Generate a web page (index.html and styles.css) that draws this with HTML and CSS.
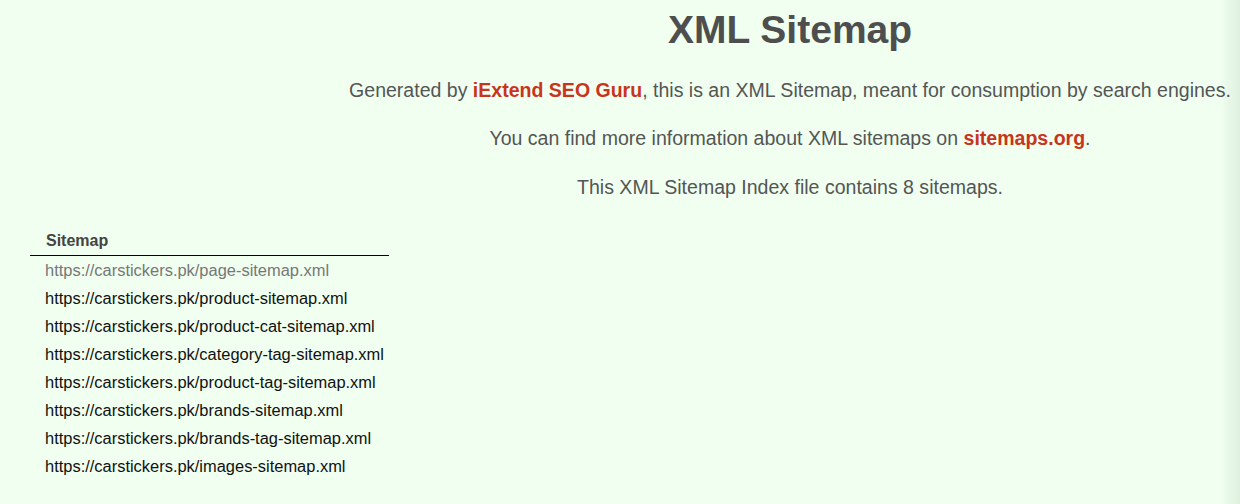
FILE: index.html
```html
<!DOCTYPE html>
<html lang="en">
<head>
<meta charset="utf-8">
<title>XML Sitemap</title>
<link rel="stylesheet" href="styles.css">
</head>
<body>
<div class="intro">
  <h1 class="title">XML Sitemap</h1>
  <p class="lead">Generated by <a class="brand" href="#">iExtend SEO Guru</a>, this is an XML Sitemap, meant for consumption by search engines.</p>
  <p class="lead">You can find more information about XML sitemaps on <a class="brand" href="#">sitemaps.org</a>.</p>
  <p class="lead">This XML Sitemap Index file contains 8 sitemaps.</p>
</div>
<table class="sitemaps">
  <thead>
    <tr><th class="head-cell">Sitemap</th></tr>
  </thead>
  <tbody>
    <tr><td class="cell"><a class="link link-visited" href="#">https://carstickers.pk/page-sitemap.xml</a></td></tr>
    <tr><td class="cell"><a class="link" href="#">https://carstickers.pk/product-sitemap.xml</a></td></tr>
    <tr><td class="cell"><a class="link" href="#">https://carstickers.pk/product-cat-sitemap.xml</a></td></tr>
    <tr><td class="cell"><a class="link" href="#">https://carstickers.pk/category-tag-sitemap.xml</a></td></tr>
    <tr><td class="cell"><a class="link" href="#">https://carstickers.pk/product-tag-sitemap.xml</a></td></tr>
    <tr><td class="cell"><a class="link" href="#">https://carstickers.pk/brands-sitemap.xml</a></td></tr>
    <tr><td class="cell"><a class="link" href="#">https://carstickers.pk/brands-tag-sitemap.xml</a></td></tr>
    <tr><td class="cell"><a class="link" href="#">https://carstickers.pk/images-sitemap.xml</a></td></tr>
  </tbody>
</table>
<div class="edge-shade"></div>
</body>
</html>
```
FILE: styles.css
```css
html, body {
  margin: 0;
  padding: 0;
}
body {
  background: #f0fff0;
  color: #555;
  font-family: "Liberation Sans", Arial, sans-serif;
  overflow: hidden;
}
.intro {
  margin-left: 340px;
  text-align: center;
}
.title {
  margin: 6px 0 0;
  font-size: 39px;
  line-height: 48px;
  font-weight: bold;
  color: #4e4e4e;
}
.lead {
  margin: 24px 0 0;
  font-size: 19.55px;
  line-height: 24px;
  color: #555;
}
.lead:last-child {
  margin-top: 25px;
}
.brand {
  color: #c9341c;
  font-weight: bold;
  text-decoration: none;
}
.sitemaps {
  margin: 31px 0 0 30px;
  border-collapse: collapse;
  border-spacing: 0;
}
.head-cell {
  text-align: left;
  font-size: 16px;
  line-height: 20px;
  font-weight: bold;
  color: #444;
  padding: 1px 5px 4px 16px;
  border-bottom: 1px solid #000;
}
.cell {
  font-size: 16.45px;
  line-height: 26px;
  padding: 1px 5px 1px 15px;
}
.link {
  color: #111;
  text-decoration: none;
}
.link-visited {
  color: #777;
}
.edge-shade {
  position: fixed;
  top: 0;
  right: 0;
  width: 20px;
  height: 100%;
  background: linear-gradient(to right, rgba(0, 40, 0, 0), rgba(0, 40, 0, 0.07));
  pointer-events: none;
}
```
